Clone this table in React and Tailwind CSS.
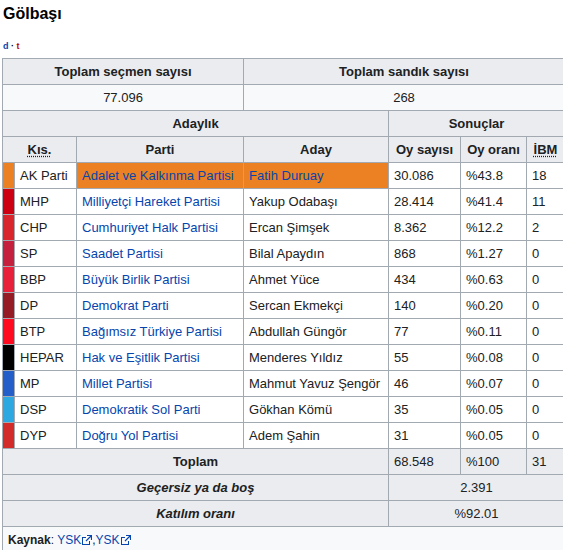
import React from 'react'

const rows = [
    { color: 'bg-[#eb8123]', kis: 'AK Parti', parti: 'Adalet ve Kalkınma Partisi', aday: 'Fatih Duruay', oy: '30.086', oran: '%43.8', ibm: '18', win: true },
    { color: 'bg-[#cc0010]', kis: 'MHP', parti: 'Milliyetçi Hareket Partisi', aday: 'Yakup Odabaşı', oy: '28.414', oran: '%41.4', ibm: '11' },
    { color: 'bg-[#d8262c]', kis: 'CHP', parti: 'Cumhuriyet Halk Partisi', aday: 'Ercan Şimşek', oy: '8.362', oran: '%12.2', ibm: '2' },
    { color: 'bg-[#c6203f]', kis: 'SP', parti: 'Saadet Partisi', aday: 'Bilal Apaydın', oy: '868', oran: '%1.27', ibm: '0' },
    { color: 'bg-[#e8203a]', kis: 'BBP', parti: 'Büyük Birlik Partisi', aday: 'Ahmet Yüce', oy: '434', oran: '%0.63', ibm: '0' },
    { color: 'bg-[#951c25]', kis: 'DP', parti: 'Demokrat Parti', aday: 'Sercan Ekmekçi', oy: '140', oran: '%0.20', ibm: '0' },
    { color: 'bg-[#ff0a1e]', kis: 'BTP', parti: 'Bağımsız Türkiye Partisi', aday: 'Abdullah Güngör', oy: '77', oran: '%0.11', ibm: '0' },
    { color: 'bg-black', kis: 'HEPAR', parti: 'Hak ve Eşitlik Partisi', aday: 'Menderes Yıldız', oy: '55', oran: '%0.08', ibm: '0' },
    { color: 'bg-[#245ec9]', kis: 'MP', parti: 'Millet Partisi', aday: 'Mahmut Yavuz Şengör', oy: '46', oran: '%0.07', ibm: '0' },
    { color: 'bg-[#2ea8e0]', kis: 'DSP', parti: 'Demokratik Sol Parti', aday: 'Gökhan Kömü', oy: '35', oran: '%0.05', ibm: '0' },
    { color: 'bg-[#d32a2a]', kis: 'DYP', parti: 'Doğru Yol Partisi', aday: 'Adem Şahin', oy: '31', oran: '%0.05', ibm: '0' },
];

function ExtIcon() {
    return (
        <svg width="10" height="10" viewBox="0 0 10 10" className="inline-block ml-[1px] align-[-1px]">
            <rect x="0.5" y="2.5" width="7" height="7" fill="none" stroke="#0645ad" strokeWidth="1" />
            <rect x="4" y="0" width="6" height="6" fill="white" />
            <path d="M5 0.5 H9.5 V5 M9.5 0.5 L4 6" fill="none" stroke="#0645ad" strokeWidth="1.2" />
        </svg>
    );
}

export default function App() {
    const th = "border border-[#a2a9b1] bg-[#eaecf0] font-bold text-center px-[5px]";
    const td = "border border-[#a2a9b1] px-[5px]";

    return (
        <div className="bg-white min-h-[550px] text-[#202122] font-['Liberation_Sans',Arial,sans-serif]">
            <h2 className="px-[3px] pt-[4px] text-[16px] font-bold leading-[20px] text-black">Gölbaşı</h2>
            <div className="px-[3px] mt-[17px] text-[9px] font-bold leading-[10px]">
                <span className="text-[#0645ad]">d</span>
                <span className="text-black"> · </span>
                <span className="text-[#ba0000]">t</span>
            </div>

            {/* Results table */}
            <table className="ml-[2px] mt-[7px] w-[562px] table-fixed border-collapse bg-[#f8f9fa] text-[13px] leading-[16px]">
                <colgroup>
                    <col className="w-[12px]" />
                    <col className="w-[62px]" />
                    <col className="w-[167px]" />
                    <col className="w-[145px]" />
                    <col className="w-[72px]" />
                    <col className="w-[66px]" />
                    <col className="w-[38px]" />
                </colgroup>
                <tbody>
                    <tr className="h-[26px]">
                        <th colSpan={3} className={th}>Toplam seçmen sayısı</th>
                        <th colSpan={4} className={th}>Toplam sandık sayısı</th>
                    </tr>
                    <tr className="h-[26px]">
                        <td colSpan={3} className={td + " text-center"}>77.096</td>
                        <td colSpan={4} className={td + " text-center"}>268</td>
                    </tr>
                    <tr className="h-[26px]">
                        <th colSpan={4} className={th}>Adaylık</th>
                        <th colSpan={3} className={th}>Sonuçlar</th>
                    </tr>
                    <tr className="h-[26px]">
                        <th colSpan={2} className={th}>
                            <span className="underline decoration-dotted underline-offset-2">Kıs.</span>
                        </th>
                        <th className={th}>Parti</th>
                        <th className={th}>Aday</th>
                        <th className={th + " px-[2px]"}>Oy sayısı</th>
                        <th className={th + " px-[2px]"}>Oy oranı</th>
                        <th className={th + " px-[2px]"}>
                            <span className="underline decoration-dotted underline-offset-2">İBM</span>
                        </th>
                    </tr>
                    {rows.map((r) => (
                        <tr key={r.kis} className="h-[26px] bg-white">
                            <td className={"border border-[#a2a9b1] " + r.color}></td>
                            <td className={td + " whitespace-nowrap"}>{r.kis}</td>
                            <td className={td + " whitespace-nowrap text-[#0645ad] " + (r.win ? "bg-[#eb8123]" : "")}>{r.parti}</td>
                            <td className={td + " whitespace-nowrap " + (r.win ? "bg-[#eb8123] text-[#0645ad]" : "")}>{r.aday}</td>
                            <td className={td}>{r.oy}</td>
                            <td className={td}>{r.oran}</td>
                            <td className={td}>{r.ibm}</td>
                        </tr>
                    ))}
                    <tr className="h-[26px] bg-[#eaecf0]">
                        <th colSpan={4} className={th}>Toplam</th>
                        <td className={td}>68.548</td>
                        <td className={td}>%100</td>
                        <td className={td}>31</td>
                    </tr>
                    <tr className="h-[26px] bg-[#eaecf0]">
                        <th colSpan={4} className={th + " italic"}>Geçersiz ya da boş</th>
                        <td colSpan={3} className={td + " text-center"}>2.391</td>
                    </tr>
                    <tr className="h-[26px] bg-[#eaecf0]">
                        <th colSpan={4} className={th + " italic"}>Katılım oranı</th>
                        <td colSpan={3} className={td + " text-center"}>%92.01</td>
                    </tr>
                    <tr className="h-[26px]">
                        <td colSpan={7} className={td + " text-[12px]"}>
                            <span className="font-bold">Kaynak</span>: <span className="text-[#0645ad]">YSK</span><ExtIcon />,<span className="text-[#0645ad]">YSK</span><ExtIcon />
                        </td>
                    </tr>
                </tbody>
            </table>
        </div>
    );
}
